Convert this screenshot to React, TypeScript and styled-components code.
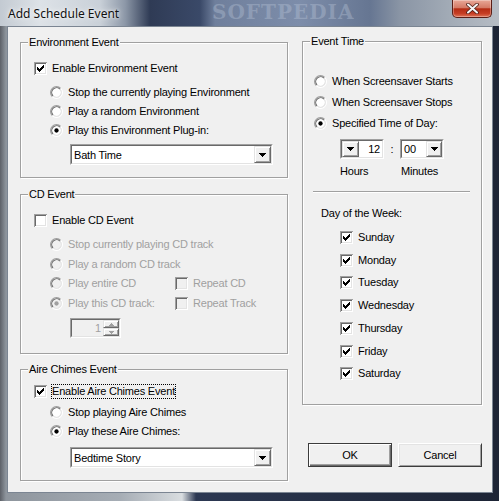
import React from "react";
import styled, { createGlobalStyle } from "styled-components";

const GlobalStyle = createGlobalStyle`
  html, body { margin: 0; padding: 0; background: #ffffff; }
  body { font-family: "Liberation Sans", Arial, sans-serif; }
`;

const Window = styled.div`
  width: 499px;
  height: 501px;
  display: flex;
  flex-direction: column;
  overflow: hidden;
  background: linear-gradient(
    90deg,
    #5d6168 0,
    #8e959d 6px,
    #a6adb5 120px,
    #d9dde0 182px,
    #2c3852 196px,
    #1d2435 100%
  );
`;

const TitleBar = styled.div`
  position: relative;
  height: 26px;
  flex: none;
  display: flex;
  justify-content: space-between;
  background: linear-gradient(
    90deg,
    #c3cad2 0,
    #dde2e7 40px,
    #c9d0d8 100px,
    #8d98a8 125px,
    #2f3b55 150px,
    #3a4968 200px,
    #6f7f9c 215px,
    #7d8daa 300px,
    #667692 370px,
    #8a95a5 400px,
    #a2abb6 450px,
    #b6bcc4 100%
  );
`;

const Watermark = styled.span`
  position: absolute;
  left: 212px;
  top: 1px;
  font-family: "DejaVu Serif", serif;
  font-weight: bold;
  font-size: 20px;
  line-height: 22px;
  letter-spacing: 1px;
  color: rgba(190, 202, 220, 0.35);
  pointer-events: none;
`;

const Title = styled.span`
  position: relative;
  margin: 6px 0 0 8px;
  font-family: "Noto Sans", "Liberation Sans", sans-serif;
  font-size: 12px;
  line-height: 16px;
  color: #111;
  text-shadow: 0 0 6px rgba(255, 255, 255, 0.9), 0 0 3px rgba(255, 255, 255, 0.8);
`;

const CloseBtn = styled.div`
  position: relative;
  width: 40px;
  height: 18px;
  margin-right: 7px;
  box-sizing: border-box;
  border: 1px solid #5a1e16;
  border-top: none;
  border-radius: 0 0 5px 5px;
  display: flex;
  align-items: center;
  justify-content: center;
  background: linear-gradient(#e8a898 0, #d47a66 45%, #b42c14 52%, #c63e24 80%, #de7458 100%);
  box-shadow: inset 0 0 0 1px rgba(255, 255, 255, 0.3);
`;

const FrameBody = styled.div`
  flex: 1;
  display: flex;
  padding: 0 6px 8px 7px;
`;

const Client = styled.div`
  flex: 1;
  display: flex;
  align-items: flex-start;
  gap: 14px;
  padding: 14px 10px 0 12px;
  border: 1px solid #7b8592;
  background: #f0f0f0;
  font-size: 11px;
  letter-spacing: -0.2px;
  color: #000;
`;

const LeftCol = styled.div`
  width: 268px;
  margin-top: 1px;
  display: flex;
  flex-direction: column;
  gap: 16px;
  &> :nth-child(3) { margin-top: -1px; }
`;

const RightCol = styled.div`
  width: 180px;
  display: flex;
  flex-direction: column;
`;

const Group = styled.div<{ $h: number; $pt: number; $pl: number }>`
  position: relative;
  box-sizing: border-box;
  height: ${(p) => p.$h}px;
  padding: ${(p) => p.$pt}px 0 0 ${(p) => p.$pl}px;
  border: 1px solid #a0a0a0;
  box-shadow: 1px 1px 0 #fff, inset 1px 1px 0 #fff;
`;

const Caption = styled.span`
  position: absolute;
  top: -7px;
  left: 7px;
  padding: 0 1px;
  line-height: 13px;
  background: #f0f0f0;
`;

const Row = styled.div<{ $h?: number }>`
  display: flex;
  align-items: center;
  height: ${(p) => p.$h ?? 19}px;
`;

const Stack = styled.div<{ $mt?: number; $ml?: number }>`
  display: flex;
  flex-direction: column;
  margin-top: ${(p) => p.$mt ?? 0}px;
  margin-left: ${(p) => p.$ml ?? 0}px;
`;

const Cell = styled.div<{ $w: number }>`
  width: ${(p) => p.$w}px;
  display: flex;
  align-items: center;
`;

const Label = styled.span<{ $off?: boolean; $focus?: boolean }>`
  margin-left: 4px;
  line-height: 13px;
  white-space: nowrap;
  border: 1px dotted ${(p) => (p.$focus ? "#000" : "transparent")};
  color: ${(p) => (p.$off ? "#a0a0a0" : "#000")};
`;

const Sunken = styled.div<{ $w: number; $h: number; $mt?: number; $ml?: number }>`
  box-sizing: border-box;
  width: ${(p) => p.$w}px;
  height: ${(p) => p.$h}px;
  margin-top: ${(p) => p.$mt ?? 0}px;
  margin-left: ${(p) => p.$ml ?? 0}px;
  border: 1px solid;
  border-color: #a0a0a0 #fff #fff #a0a0a0;
  flex: none;
`;

const SunkenInner = styled.div<{ $off?: boolean }>`
  box-sizing: border-box;
  height: 100%;
  display: flex;
  border: 1px solid;
  border-color: #696969 #e3e3e3 #e3e3e3 #696969;
  background: ${(p) => (p.$off ? "#f0f0f0" : "#fff")};
`;

const FieldText = styled.span<{ $align?: "left" | "right"; $off?: boolean }>`
  flex: 1;
  display: flex;
  align-items: center;
  justify-content: ${(p) => (p.$align === "right" ? "flex-end" : "flex-start")};
  padding: 0 2px;
  white-space: nowrap;
  color: ${(p) => (p.$off ? "#a0a0a0" : "#000")};
`;

const Raised = styled.div<{ $w: number }>`
  box-sizing: border-box;
  width: ${(p) => p.$w}px;
  flex: none;
  display: flex;
  align-items: center;
  justify-content: center;
  border: 1px solid;
  border-color: #e3e3e3 #696969 #696969 #e3e3e3;
  box-shadow: inset 1px 1px 0 #fff, inset -1px -1px 0 #a0a0a0;
  background: #f0f0f0;
`;

const SpinPart = styled(Raised)`
  flex: 1;
`;

const SpinButtons = styled.div`
  width: 16px;
  display: flex;
  flex-direction: column;
`;

const TimeRow = styled.div`
  display: flex;
  align-items: center;
  height: 20px;
  margin: 5px 0 0 26px;
`;

const Colon = styled.span`
  width: 16px;
  text-align: center;
`;

const TimeLabels = styled.div`
  display: flex;
  line-height: 13px;
  margin: 6px 0 0 26px;
`;

const TimeLabel = styled.span<{ $w?: number }>`
  width: ${(p) => (p.$w ? `${p.$w}px` : "auto")};
`;

const Separator = styled.div`
  width: 157px;
  margin: 13px 0 0 -1px;
  border-top: 1px solid #a0a0a0;
  border-bottom: 1px solid #fff;
`;

const DayTitle = styled.div`
  margin: 14px 0 0 7px;
  line-height: 13px;
`;

const ButtonRow = styled.div`
  display: flex;
  gap: 6px;
  margin: 38px 0 0 6px;
`;

const PushButton = styled.button<{ $default?: boolean }>`
  box-sizing: border-box;
  width: 84px;
  height: 24px;
  padding: 0;
  font-family: "Liberation Sans", Arial, sans-serif;
  font-size: 11px;
  letter-spacing: -0.2px;
  color: #000;
  background: #f0f0f0;
  border: 1px solid;
  border-color: ${(p) => (p.$default ? "#3c3c3c" : "#fff #3c3c3c #3c3c3c #fff")};
  box-shadow: ${(p) =>
    p.$default
      ? "inset 1px 1px 0 #fff, inset -1px -1px 0 #696969, inset -2px -2px 0 #a0a0a0"
      : "inset 1px 1px 0 #e3e3e3, inset -1px -1px 0 #a0a0a0"};
`;

const CheckBox = ({ checked, off }: { checked?: boolean; off?: boolean }) => (
  <svg width="13" height="13" viewBox="0 0 13 13" shapeRendering="crispEdges" style={{ flex: "none" }}>
    <rect x="2" y="2" width="9" height="9" fill={off ? "#f0f0f0" : "#fff"} />
    <path d="M0.5 12.5V0.5H12.5" stroke="#a0a0a0" fill="none" />
    <path d="M0.5 12.5H12.5V0.5" stroke="#fff" fill="none" />
    <path d="M1.5 11.5V1.5H11.5" stroke="#696969" fill="none" />
    <path d="M1.5 11.5H11.5V1.5" stroke="#e3e3e3" fill="none" />
    {checked && <path d="M3 5L5 7L10 2V5L5 10L3 8Z" fill={off ? "#a0a0a0" : "#000"} />}
  </svg>
);

const RadioDot = ({ checked, off }: { checked?: boolean; off?: boolean }) => (
  <svg width="13" height="13" viewBox="0 0 12 12" style={{ flex: "none" }}>
    <circle cx="6" cy="6" r="4" fill={off ? "#f0f0f0" : "#fff"} />
    <path d="M2.11 9.89A5.5 5.5 0 0 1 9.89 2.11" stroke="#a0a0a0" fill="none" />
    <path d="M9.89 2.11A5.5 5.5 0 0 1 2.11 9.89" stroke="#fff" fill="none" />
    <path d="M2.82 9.18A4.5 4.5 0 0 1 9.18 2.82" stroke="#696969" fill="none" />
    <path d="M9.18 2.82A4.5 4.5 0 0 1 2.82 9.18" stroke="#e3e3e3" fill="none" />
    {checked && <circle cx="6" cy="6" r="2" fill={off ? "#a0a0a0" : "#000"} />}
  </svg>
);

const Arrow = ({ off }: { off?: boolean }) => (
  <svg width="7" height="4" viewBox="0 0 7 4" shapeRendering="crispEdges">
    <path d="M0 0H7L3.5 4Z" fill={off ? "#a0a0a0" : "#000"} />
  </svg>
);

const SmallArrow = ({ up }: { up?: boolean }) => (
  <svg width="5" height="3" viewBox="0 0 5 3" shapeRendering="crispEdges">
    <path d={up ? "M2.5 0L5 3H0Z" : "M0 0H5L2.5 3Z"} fill="#a0a0a0" />
  </svg>
);

const Combo = ({ text, mt }: { text: string; mt: number }) => (
  <Sunken $w={203} $h={21} $mt={mt} $ml={36}>
    <SunkenInner>
      <FieldText>{text}</FieldText>
      <Raised $w={17}>
        <Arrow />
      </Raised>
    </SunkenInner>
  </Sunken>
);

const Check = ({
  label,
  checked,
  off,
  focus,
}: {
  label: string;
  checked?: boolean;
  off?: boolean;
  focus?: boolean;
}) => (
  <>
    <CheckBox checked={checked} off={off} />
    <Label $off={off} $focus={focus}>
      {label}
    </Label>
  </>
);

const Radio = ({ label, checked, off }: { label: string; checked?: boolean; off?: boolean }) => (
  <>
    <RadioDot checked={checked} off={off} />
    <Label $off={off}>{label}</Label>
  </>
);

const days = ["Sunday", "Monday", "Tuesday", "Wednesday", "Thursday", "Friday", "Saturday"];

export default function App() {
  return (
    <>
      <GlobalStyle />
      <Window>
        <TitleBar>
          <Watermark>SOFTPEDIA</Watermark>
          <Title>Add Schedule Event</Title>
          <CloseBtn>
            <svg width="13" height="11" viewBox="0 0 13 11">
              <path d="M2 1.5L11 9.5M11 1.5L2 9.5" stroke="#4a1a12" strokeWidth="3.6" strokeLinecap="round" />
              <path d="M2 1.5L11 9.5M11 1.5L2 9.5" stroke="#f4f4f4" strokeWidth="2.1" strokeLinecap="round" />
            </svg>
          </CloseBtn>
        </TitleBar>
        <FrameBody>
          <Client>
            <LeftCol>
              <Group $h={136} $pt={16} $pl={13}>
                <Caption>Environment Event</Caption>
                <Row>
                  <Check label="Enable Environment Event" checked />
                </Row>
                <Stack $mt={5} $ml={16}>
                  <Row>
                    <Radio label="Stop the currently playing Environment" />
                  </Row>
                  <Row>
                    <Radio label="Play a random Environment" />
                  </Row>
                  <Row>
                    <Radio label="Play this Environment Plug-in:" checked />
                  </Row>
                </Stack>
                <Combo text="Bath Time" mt={4} />
              </Group>

              <Group $h={160} $pt={16} $pl={13}>
                <Caption>CD Event</Caption>
                <Row>
                  <Check label="Enable CD Event" />
                </Row>
                <Stack $mt={5} $ml={16}>
                  <Row $h={19.5}>
                    <Radio label="Stop currently playing CD track" off />
                  </Row>
                  <Row $h={19.5}>
                    <Radio label="Play a random CD track" off />
                  </Row>
                  <Row $h={19.5}>
                    <Cell $w={125}>
                      <Radio label="Play entire CD" off />
                    </Cell>
                    <Check label="Repeat CD" off />
                  </Row>
                  <Row $h={19.5}>
                    <Cell $w={125}>
                      <Radio label="Play this CD track:" checked off />
                    </Cell>
                    <Check label="Repeat Track" off />
                  </Row>
                </Stack>
                <Sunken $w={51} $h={20} $mt={5} $ml={36}>
                  <SunkenInner $off>
                    <FieldText $align="right" $off>
                      1
                    </FieldText>
                    <SpinButtons>
                      <SpinPart $w={16}>
                        <SmallArrow up />
                      </SpinPart>
                      <SpinPart $w={16}>
                        <SmallArrow />
                      </SpinPart>
                    </SpinButtons>
                  </SunkenInner>
                </Sunken>
              </Group>

              <Group $h={112} $pt={12} $pl={13}>
                <Caption>Aire Chimes Event</Caption>
                <Row>
                  <Check label="Enable Aire Chimes Event" checked focus />
                </Row>
                <Stack $mt={2} $ml={16}>
                  <Row>
                    <Radio label="Stop playing Aire Chimes" />
                  </Row>
                  <Row>
                    <Radio label="Play these Aire Chimes:" checked />
                  </Row>
                </Stack>
                <Combo text="Bedtime Story" mt={6} />
              </Group>
            </LeftCol>

            <RightCol>
              <Group $h={364} $pt={29} $pl={11}>
                <Caption>Event Time</Caption>
                <Stack>
                  <Row $h={21}>
                    <Radio label="When Screensaver Starts" />
                  </Row>
                  <Row $h={21}>
                    <Radio label="When Screensaver Stops" />
                  </Row>
                  <Row $h={21}>
                    <Radio label="Specified Time of Day:" checked />
                  </Row>
                </Stack>
                <TimeRow>
                  <Sunken $w={44} $h={20}>
                    <SunkenInner>
                      <Raised $w={17}>
                        <Arrow />
                      </Raised>
                      <FieldText $align="right">12</FieldText>
                    </SunkenInner>
                  </Sunken>
                  <Colon>:</Colon>
                  <Sunken $w={44} $h={20}>
                    <SunkenInner>
                      <FieldText>00</FieldText>
                      <Raised $w={16}>
                        <Arrow />
                      </Raised>
                    </SunkenInner>
                  </Sunken>
                </TimeRow>
                <TimeLabels>
                  <TimeLabel $w={61}>Hours</TimeLabel>
                  <TimeLabel>Minutes</TimeLabel>
                </TimeLabels>
                <Separator />
                <DayTitle>Day of the Week:</DayTitle>
                <Stack $mt={6} $ml={26}>
                  {days.map((d) => (
                    <Row key={d} $h={22.75}>
                      <Check label={d} checked />
                    </Row>
                  ))}
                </Stack>
              </Group>
              <ButtonRow>
                <PushButton $default>OK</PushButton>
                <PushButton>Cancel</PushButton>
              </ButtonRow>
            </RightCol>
          </Client>
        </FrameBody>
      </Window>
    </>
  );
}
